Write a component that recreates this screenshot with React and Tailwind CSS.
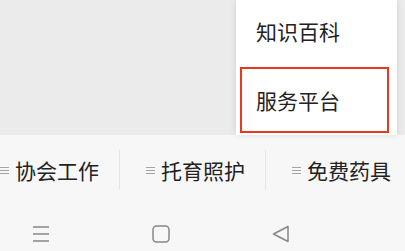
// App.jsx
const tabs = ['协会工作', '托育照护', '免费药具'];

function MenuIcon() {
  return (
    <svg width="9" height="9" viewBox="0 0 9 9" className="shrink-0">
      <path d="M0 1.5h9M0 4.5h9M0 7.5h9" stroke="#a3a3a3" strokeWidth="1" />
    </svg>
  );
}

export default function App() {
  return (
    <div
      className="flex h-[251px] w-[405px] flex-col overflow-hidden bg-[#f7f7f7] text-[#222]"
      style={{ fontFamily: '"Noto Sans CJK SC", "Noto Sans", sans-serif' }}
    >
      <div className="relative h-[135px] shrink-0 bg-[#ebebeb]">
        <div className="absolute top-0 left-[236px] flex h-[135px] w-[161px] flex-col bg-white pl-1 shadow-[0_0_6px_rgba(0,0,0,0.12)]">
          <div className="flex h-[67px] items-center pb-[4px] pl-4 text-[21px] leading-none">知识百科</div>
          <div className="flex h-[66px] w-[149px] items-center border-2 border-[#e8391e] pl-[14px] text-[21px] leading-none">
            服务平台
          </div>
        </div>
      </div>

      <div className="flex shrink-0 pt-[15px]">
        <div className="-ml-[26px] flex shrink-0 whitespace-nowrap">
          {tabs.map((t, i) => (
            <div
              key={t}
              className={`flex h-[40px] shrink-0 items-center gap-[6px] pl-[26px] pr-[20px] ${i < tabs.length - 1 ? 'border-r border-[#e6e6e6]' : ''}`}
            >
              <MenuIcon />
              <span className="text-[21px] leading-none">{t}</span>
            </div>
          ))}
        </div>
      </div>

      <div className="flex flex-1 items-end gap-[102px] pb-[8px] pl-[32px]">
        <svg width="18" height="18" viewBox="0 0 18 18">
          <path d="M1 2h16M1 9h16M1 16h16" stroke="#888" strokeWidth="1.6" />
        </svg>
        <svg width="18" height="18" viewBox="0 0 18 18">
          <rect x="1" y="1" width="16" height="16" rx="3.5" fill="none" stroke="#888" strokeWidth="1.5" />
        </svg>
        <svg width="18" height="18" viewBox="0 0 18 18">
          <path d="M16 1.5v15L1.5 9z" fill="none" stroke="#888" strokeWidth="1.5" strokeLinejoin="round" />
        </svg>
      </div>
    </div>
  );
}
